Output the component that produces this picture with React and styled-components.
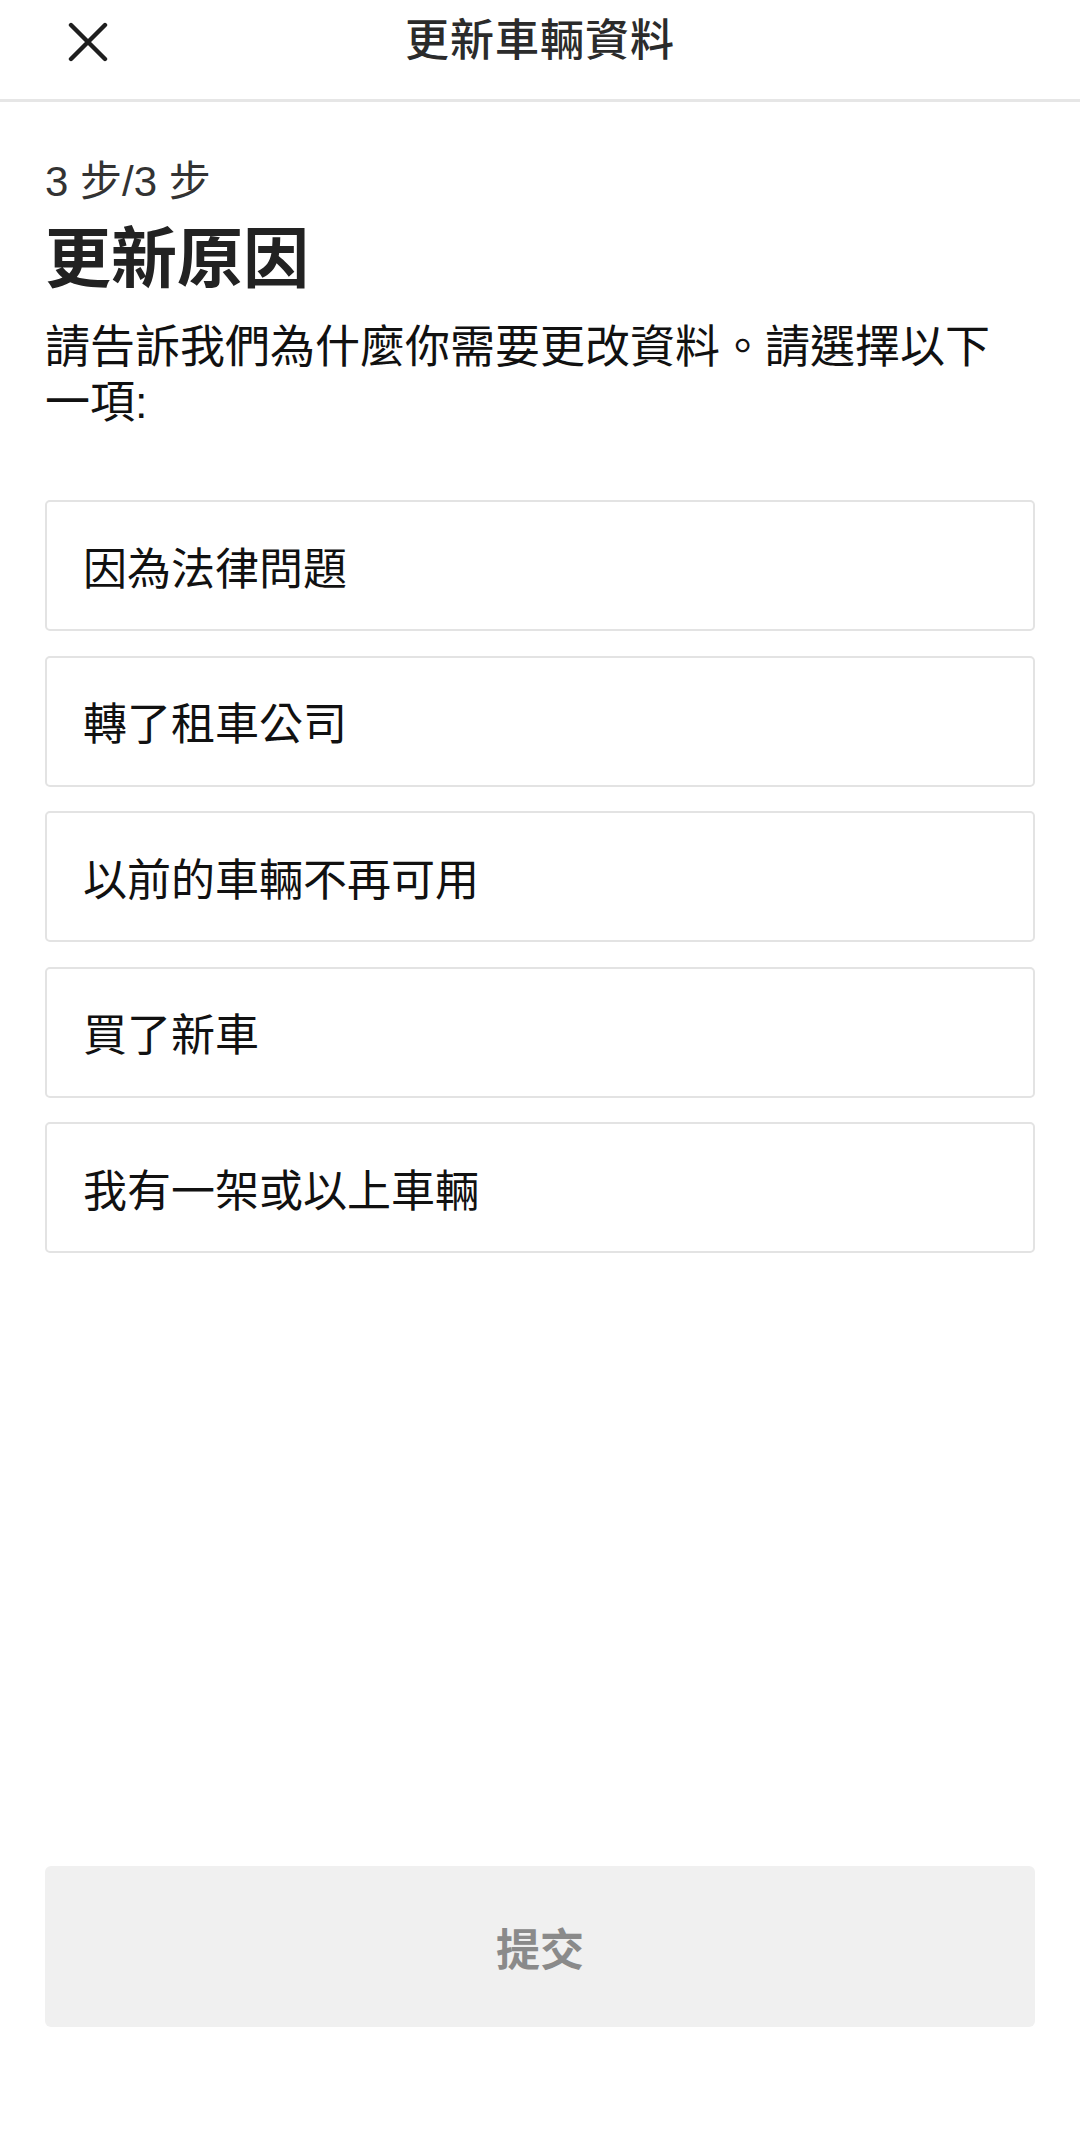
import React from "react";
import styled, { createGlobalStyle } from "styled-components";

const reasons = [
  "因為法律問題",
  "轉了租車公司",
  "以前的車輛不再可用",
  "買了新車",
  "我有一架或以上車輛",
];

const GlobalStyle = createGlobalStyle`
  html, body {
    margin: 0;
    padding: 0;
    background: #fff;
  }
  body {
    font-family: "Liberation Sans", "Noto Sans CJK TC", "Noto Sans", sans-serif;
    color: #111;
  }
`;

const App = () => (
  <Page>
    <GlobalStyle />
    <Header>
      <CloseButton aria-label="close">
        <svg width="40" height="40" viewBox="0 0 40 40">
          <path
            d="M3 3 L37 37 M37 3 L3 37"
            stroke="#1f1f1f"
            strokeWidth="4.4"
            strokeLinecap="round"
            fill="none"
          />
        </svg>
      </CloseButton>
      <HeaderTitle>更新車輛資料</HeaderTitle>
      <span />
    </Header>

    <Content>
      <StepLabel>3 步/3 步</StepLabel>
      <Title>更新原因</Title>
      <Description>請告訴我們為什麼你需要更改資料。請選擇以下一項:</Description>

      <OptionList>
        {reasons.map((r) => (
          <Option key={r}>{r}</Option>
        ))}
      </OptionList>

      <SubmitButton disabled>提交</SubmitButton>
    </Content>
  </Page>
);

const Page = styled.div`
  display: flex;
  flex-direction: column;
  min-height: 2136px;
  box-sizing: border-box;
`;

const Header = styled.header`
  display: grid;
  grid-template-columns: 1fr auto 1fr;
  align-items: center;
  height: 102px;
  padding: 0 0 16px 68px;
  box-sizing: border-box;
  border-bottom: 3px solid #e6e6e6;
`;

const CloseButton = styled.div`
  display: flex;
  align-items: center;
  width: 40px;
  height: 40px;
`;

const HeaderTitle = styled.h1`
  margin: 0 0 0 -68px;
  font-size: 44px;
  font-weight: 500;
  letter-spacing: 1px;
  color: #2b2b2b;
  line-height: 1.2;
`;

const Content = styled.main`
  flex: 1;
  display: flex;
  flex-direction: column;
  padding: 0 45px 109px;
`;

const StepLabel = styled.div`
  margin-top: 56px;
  font-size: 42px;
  line-height: 48px;
  color: #333;
`;

const Title = styled.h2`
  margin: 14px 0 0;
  font-size: 66px;
  line-height: 78px;
  font-weight: 700;
  color: #222;
`;

const Description = styled.p`
  max-width: 970px;
  margin: 22px 0 0;
  font-size: 45px;
  line-height: 55px;
  color: #111;
`;

const OptionList = styled.div`
  display: flex;
  flex-direction: column;
  gap: 24.5px;
  margin-top: 70px;
`;

const Option = styled.div`
  display: flex;
  align-items: center;
  height: 131px;
  box-sizing: border-box;
  padding: 0 36px;
  border: 2px solid #e3e3e3;
  border-radius: 5px;
  font-size: 44px;
  color: #111;
`;

const SubmitButton = styled.button`
  margin-top: auto;
  height: 161px;
  border: none;
  border-radius: 6px;
  background: #f0f0f0;
  font-family: inherit;
  font-size: 44px;
  font-weight: 700;
  color: #8a8a8a;
`;

export default App;
